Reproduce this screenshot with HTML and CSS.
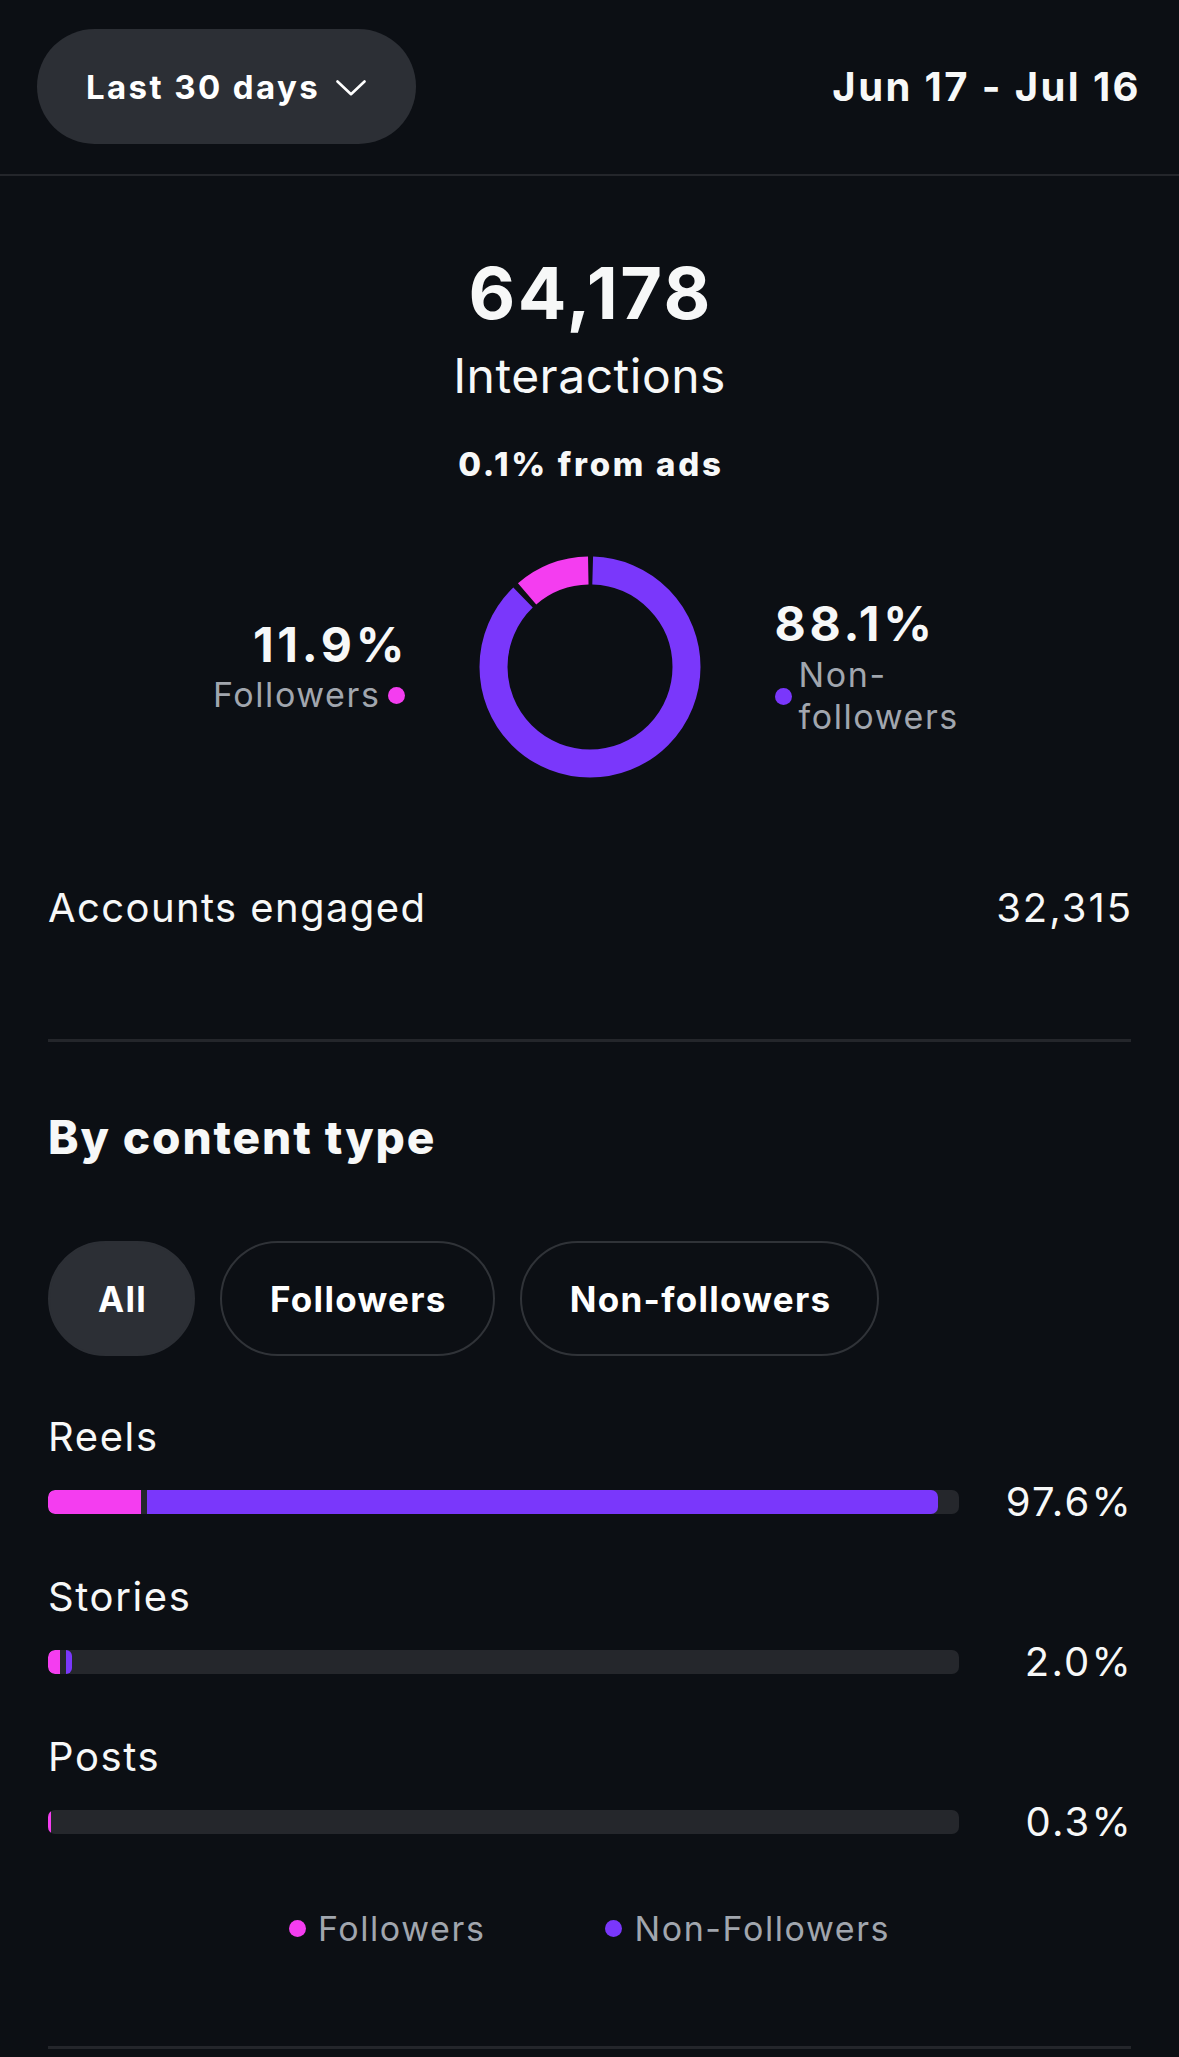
FILE: index.html
```html
<!DOCTYPE html>
<html lang="en">
<head>
<meta charset="utf-8">
<title>Interactions</title>
<link rel="stylesheet" href="styles.css">
</head>
<body>
<header class="topbar">
  <button class="range-pill">
    <span>Last 30 days</span>
    <svg class="chev" width="30" height="16" viewBox="0 0 30 16"><polyline points="1.5,1.5 15,14.2 28.5,1.5" fill="none" stroke="#ffffff" stroke-width="2.6" stroke-linecap="round" stroke-linejoin="round"/></svg>
  </button>
  <div class="date-range">Jun 17 - Jul 16</div>
</header>

<main>
  <section class="summary">
    <div class="total">64,178</div>
    <div class="total-label">Interactions</div>
    <div class="ads">0.1% from ads</div>

    <div class="donut-row">
      <div class="donut-side left">
        <div class="pct">11.9%</div>
        <div class="legend-line"><span class="muted">Followers</span><span class="dot pink"></span></div>
      </div>
      <svg class="donut" width="222" height="222" viewBox="0 0 222 222">
        <g transform="rotate(-90 111 111)">
          <circle cx="111" cy="111" r="96.5" fill="none" stroke="#7a37fb" stroke-width="28" stroke-dasharray="528.67 700" stroke-dashoffset="-2.75"/>
          <circle cx="111" cy="111" r="96.5" fill="none" stroke="#f43df0" stroke-width="28" stroke-dasharray="66.65 700" stroke-dashoffset="-536.92"/>
        </g>
      </svg>
      <div class="donut-side right">
        <div class="pct">88.1%</div>
        <div class="legend-line"><span class="dot purple"></span><span class="muted wrap">Non-followers</span></div>
      </div>
    </div>
  </section>

  <section class="content">
    <div class="stat-row">
      <span>Accounts engaged</span>
      <span class="stat-value">32,315</span>
    </div>

    <div class="divider first"></div>

    <h2 class="section-title">By content type</h2>

    <div class="chips">
      <button class="chip active">All</button>
      <button class="chip">Followers</button>
      <button class="chip">Non-followers</button>
    </div>

    <div class="type-list">
      <div class="type-item">
        <div class="type-name">Reels</div>
        <div class="bar-row">
          <div class="track">
            <div class="seg pink" style="width:10.2%"></div>
            <div class="seg purple" style="width:86.8%"></div>
          </div>
          <div class="type-pct">97.6%</div>
        </div>
      </div>
      <div class="type-item">
        <div class="type-name">Stories</div>
        <div class="bar-row">
          <div class="track">
            <div class="seg pink" style="width:12px"></div>
            <div class="seg purple" style="width:6px"></div>
          </div>
          <div class="type-pct">2.0%</div>
        </div>
      </div>
      <div class="type-item">
        <div class="type-name">Posts</div>
        <div class="bar-row">
          <div class="track">
            <div class="seg pink" style="width:3px"></div>
          </div>
          <div class="type-pct">0.3%</div>
        </div>
      </div>
    </div>

    <div class="legend">
      <div class="legend-item"><span class="dot pink"></span><span class="muted">Followers</span></div>
      <div class="legend-item"><span class="dot purple"></span><span class="muted">Non-Followers</span></div>
    </div>

    <div class="divider last"></div>
  </section>
</main>
</body>
</html>
```

FILE: styles.css
```css
* { box-sizing: border-box; }

html, body {
  margin: 0;
  padding: 0;
  background: #0c0f14;
}

body {
  width: 1179px;
  min-height: 2057px;
  color: #f7f8f8;
  font-family: Inter, "Noto Sans", "Liberation Sans", sans-serif;
}

/* Header */
.topbar {
  display: flex;
  align-items: center;
  justify-content: space-between;
  height: 176px;
  padding: 29px 38px 30px 37px;
  border-bottom: 2px solid #24262b;
}

.range-pill {
  display: flex;
  align-items: center;
  gap: 16px;
  height: 115px;
  padding: 0 50px 0 49px;
  border: none;
  border-radius: 58px;
  background: #2c2f35;
  color: #ffffff;
  font-family: inherit;
  font-size: 33px;
  font-weight: 700;
  letter-spacing: 2.4px;
}

.chev { display: block; margin-top: 2px; }

.date-range {
  font-size: 40px;
  font-weight: 700;
  letter-spacing: 2.4px;
}

/* Summary */
.summary {
  text-align: center;
}

.total {
  margin-top: 77px;
  font-size: 72px;
  line-height: 80px;
  font-weight: 700;
  letter-spacing: 2.5px;
  text-indent: 2.5px;
}

.total-label {
  margin-top: 15px;
  font-size: 48px;
  line-height: 56px;
  font-weight: 400;
  letter-spacing: 0.5px;
}

.ads {
  margin-top: 40px;
  font-size: 33px;
  line-height: 40px;
  font-weight: 800;
  letter-spacing: 2.7px;
  text-indent: 2.7px;
}

.donut-row {
  display: grid;
  grid-template-columns: 1fr 222px 1fr;
  column-gap: 74px;
  margin-top: 72px;
  text-align: left;
}

.donut { display: block; }

.donut-side .pct {
  font-size: 48px;
  line-height: 52px;
  font-weight: 700;
  letter-spacing: 3.7px;
}

.donut-side.left {
  margin-top: 63px;
  display: flex;
  flex-direction: column;
  align-items: flex-end;
}

.donut-side.left .pct { margin-right: -3.7px; }

.donut-side.right {
  margin-top: 42px;
}

.legend-line {
  display: flex;
  align-items: center;
  gap: 7px;
  font-size: 34px;
  line-height: 48px;
  letter-spacing: 1.6px;
}

.donut-side.right .legend-line {
  margin-top: 4px;
  line-height: 42px;
  gap: 7px;
}

.muted { color: #a1a6ae; }

.wrap { width: 180px; }

.dot {
  display: inline-block;
  flex: 0 0 auto;
  width: 17px;
  height: 17px;
  border-radius: 50%;
}

.pink { background: #f43df0; }
.purple { background: #7a37fb; }

/* Content */
.content {
  padding: 0 48px;
}

.stat-row {
  display: flex;
  justify-content: space-between;
  margin-top: 106px;
  font-size: 40px;
  line-height: 48px;
  letter-spacing: 1.4px;
}

.stat-value { margin-right: -2px; letter-spacing: 2px; }

.divider {
  height: 3px;
  background: #24262b;
}

.divider.first { margin-top: 107px; }

.section-title {
  margin: 67px 0 0;
  font-size: 46px;
  line-height: 56px;
  font-weight: 800;
  letter-spacing: 1.9px;
}

.chips {
  display: flex;
  gap: 25px;
  margin-top: 76px;
}

.chip {
  height: 115px;
  padding: 0 46px 0 48px;
  border: 2px solid #303338;
  border-radius: 58px;
  background: transparent;
  color: #ffffff;
  font-family: inherit;
  font-size: 35px;
  font-weight: 700;
  letter-spacing: 1.3px;
}

.chip.active {
  background: #2c2f35;
  border-color: #2c2f35;
}

.type-list {
  margin-top: 57px;
  display: flex;
  flex-direction: column;
  gap: 47px;
}

.type-name {
  font-size: 40px;
  line-height: 48px;
  letter-spacing: 1.6px;
}

.bar-row {
  display: flex;
  align-items: center;
  margin-top: 17px;
  height: 48px;
}

.track {
  display: flex;
  gap: 6px;
  flex: 0 0 911px;
  height: 24px;
  border-radius: 7px;
  background: #25272c;
  overflow: hidden;
}

.seg { height: 100%; }
.seg:first-child { border-radius: 7px 0 0 7px; }
.seg:last-child { border-top-right-radius: 7px; border-bottom-right-radius: 7px; }

.type-pct {
  flex: 1;
  text-align: right;
  font-size: 40px;
  line-height: 48px;
  letter-spacing: 2.2px;
  margin-right: -2px;
}

.legend {
  display: flex;
  justify-content: center;
  gap: 120px;
  margin-top: 60px;
  font-size: 34px;
  line-height: 45px;
  letter-spacing: 1.6px;
}

.legend-item {
  display: flex;
  align-items: center;
  gap: 12px;
}

.divider.last { margin-top: 95px; }
```
